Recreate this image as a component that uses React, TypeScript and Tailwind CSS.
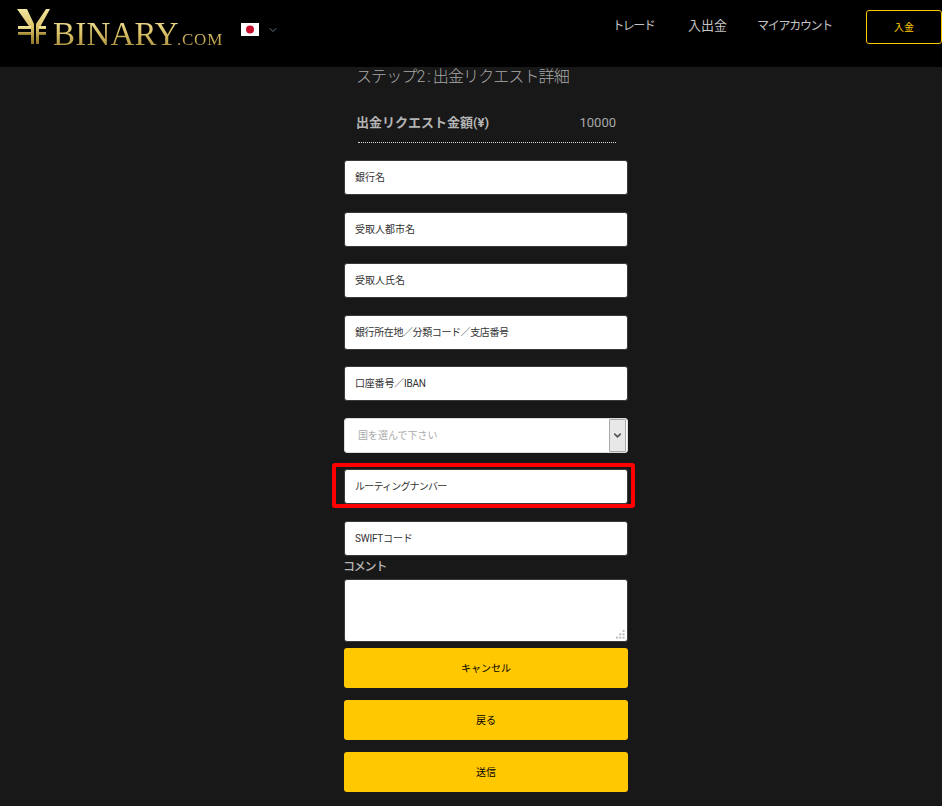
import { ChevronDown } from 'lucide-react'

const font = "font-['Roboto','Noto_Sans_CJK_JP',sans-serif]"

const fields = [
  { label: '銀行名', spacing: 'tracking-normal' },
  { label: '受取人都市名', spacing: 'tracking-normal' },
  { label: '受取人氏名', spacing: 'tracking-normal' },
  { label: '銀行所在地／分類コード／支店番号', spacing: 'tracking-[-0.4px]' },
  { label: '口座番号／IBAN', spacing: 'tracking-[-0.2px]' },
]

function TextField({ placeholder, spacing }: { placeholder: string; spacing: string }) {
  return (
    <input
      readOnly
      placeholder={placeholder}
      className={`h-[35px] w-full rounded-[3px] border border-[#3a3a3a] bg-white px-[10px] text-[10px] text-[#333] outline-none placeholder:text-[#333] ${spacing}`}
    />
  )
}

function YenMark() {
  return (
    <svg width="36" height="36" viewBox="0 0 36 36" className="shrink-0">
      <defs>
        <linearGradient id="gold" x1="0" y1="0" x2="0" y2="1">
          <stop offset="0" stopColor="#f3e7a0" />
          <stop offset="0.55" stopColor="#d9bf63" />
          <stop offset="1" stopColor="#8f7428" />
        </linearGradient>
      </defs>
      <path d="M1 0h10l7 15v20h-3V20Z" fill="url(#gold)" />
      <path d="M34 0h-4L20 15v20h3V20Z" fill="url(#gold)" />
      <path d="M2 17h13v3H2Zm0 6h13v3H2Zm21-6h7v3h-7Zm0 6h7v3h-7Z" fill="url(#gold)" />
    </svg>
  )
}

function JapanFlag() {
  return (
    <svg width="18" height="13" viewBox="0 0 18 13">
      <rect width="18" height="13" fill="#fff" />
      <circle cx="9" cy="6.5" r="4" fill="#c8102e" />
    </svg>
  )
}

function Header() {
  return (
    <header className="flex h-[67px] items-start bg-black">
      <div className="ml-[16px] mt-[9px] flex w-[209px] items-start">
        <YenMark />
        <div className="ml-[1px] mt-[7px] flex items-baseline bg-gradient-to-b from-[#f3e7a0] via-[#d9bf63] to-[#9a7f30] bg-clip-text font-['Liberation_Serif',serif] text-transparent">
          <span className="text-[33px] leading-[36px] tracking-[0.2px]">BINARY</span>
          <span className="-ml-[2px] text-[17px] leading-[20px] tracking-[0.8px]">.COM</span>
        </div>
      </div>
      <div className="ml-[16px] mt-[23px] flex items-center gap-[8px]">
        <JapanFlag />
        <ChevronDown size={12} strokeWidth={1.5} className="text-[#8aa0b5]" />
      </div>
      <nav className="ml-auto flex items-start">
        <a className="mt-[17px] text-[12px] leading-[18px] tracking-[-1.6px] text-[#c4c4c4]">トレード</a>
        <a className="ml-[34px] mt-[17px] text-[13px] leading-[18px] text-[#c4c4c4]">入出金</a>
        <a className="ml-[30px] mt-[17px] text-[12px] leading-[18px] tracking-[-1.3px] text-[#c4c4c4]">マイアカウント</a>
        <a className="ml-[34px] mt-[10px] flex h-[34px] w-[76px] items-center justify-center rounded-[3px] border border-[#ffc800] text-[10px] text-[#ffc800]">
          入金
        </a>
      </nav>
    </header>
  )
}

export default function App() {
  return (
    <div className={`h-[806px] w-[942px] overflow-hidden bg-[#181818] ${font}`}>
      <Header />
      <main className="ml-[344px] w-[284px]">
        <h2 className="ml-[12px] mt-px text-[16px] font-light leading-[18px] tracking-[-0.9px] text-[#a8a8a8]">
          ステップ2 : 出金リクエスト詳細
        </h2>
        <div className="ml-[14px] mr-[12px] mt-[24px] flex h-[33px] items-start justify-between border-b border-dotted border-[#d8d8d8]">
          <span className="-ml-[2px] text-[13px] font-bold leading-[26px] text-[#b4b4b4]">出金リクエスト金額(¥)</span>
          <span className="text-[13px] leading-[26px] text-[#a8a8a8]">10000</span>
        </div>
        <div className="mt-[17px] flex flex-col gap-[16.5px]">
          {fields.map((f) => (
            <TextField key={f.label} placeholder={f.label} spacing={f.spacing} />
          ))}
          <div className="flex h-[35px] items-center rounded-[3px] border border-[#dcdcdc] bg-white pl-[13px] pr-[1px]">
            <span className="text-[10px] text-[#aaa]">国を選んで下さい</span>
            <span className="ml-auto flex h-[33px] w-[17px] items-center justify-center rounded-[1px] border border-[#a8a8a8] bg-[#e8e8e8]">
              <ChevronDown size={11} strokeWidth={3.5} className="text-[#555]" />
            </span>
          </div>
          <div className="relative">
            <TextField placeholder="ルーティングナンバー" spacing="tracking-[-0.8px]" />
            <div className="absolute -bottom-[4px] -left-[12px] -right-[7px] -top-[6px] rounded-[3px] border-[4px] border-[#f00]" />
          </div>
          <TextField placeholder="SWIFTコード" spacing="tracking-[-0.2px]" />
        </div>
        <label className="-ml-[1px] mt-[3px] block text-[12px] font-medium leading-[17px] tracking-[-1.2px] text-[#b4b4b4]">
          コメント
        </label>
        <div className="relative mt-[3.5px]">
          <textarea
            readOnly
            className="block h-[63px] w-full resize-none rounded-[3px] border border-[#3a3a3a] bg-white outline-none"
          />
          {/* resize grip */}
          <svg width="9" height="9" viewBox="0 0 9 9" className="absolute bottom-[3px] right-[3px]" fill="#bdbdbd">
            <rect x="6.5" y="0" width="2" height="2" />
            <rect x="3.2" y="3.3" width="2" height="2" />
            <rect x="6.5" y="3.3" width="2" height="2" />
            <rect x="0" y="6.6" width="2" height="2" />
            <rect x="3.2" y="6.6" width="2" height="2" />
            <rect x="6.5" y="6.6" width="2" height="2" />
          </svg>
        </div>
        <div className="mt-[6px] flex flex-col gap-[12px]">
          {['キャンセル', '戻る', '送信'].map((b) => (
            <button key={b} className="h-[40px] w-full rounded-[3px] bg-[#ffc800] text-[10px] text-black">
              {b}
            </button>
          ))}
        </div>
      </main>
    </div>
  )
}
